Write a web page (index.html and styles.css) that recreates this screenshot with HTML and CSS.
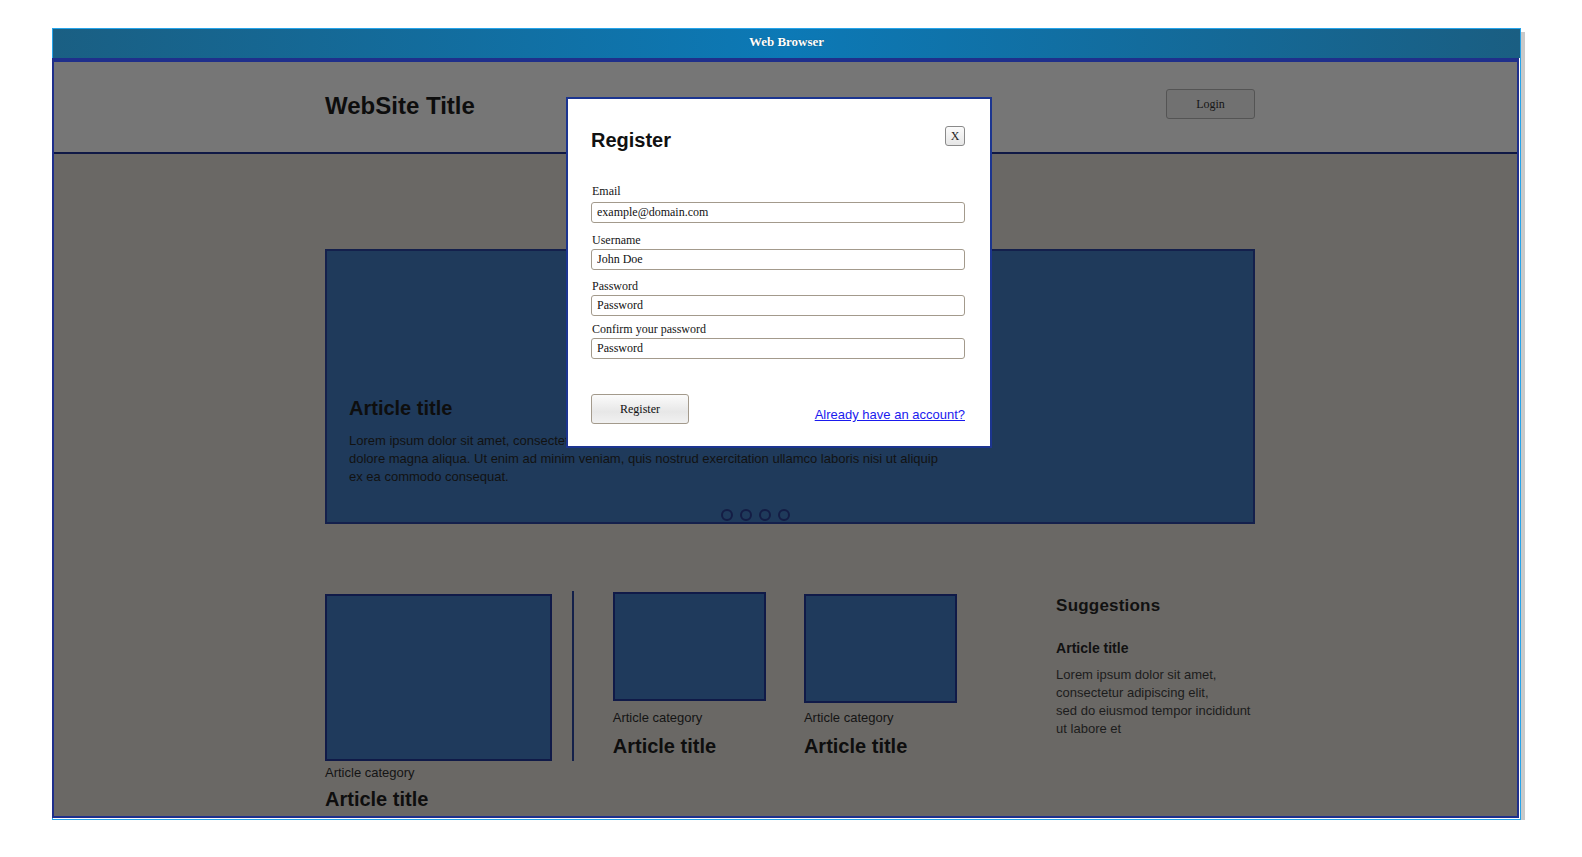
FILE: index.html
```html
<!DOCTYPE html>
<html lang="en">
<head>
<meta charset="utf-8">
<title>Register</title>
<link rel="stylesheet" href="styles.css">
</head>
<body>
<div class="window">
  <div class="titlebar">Web Browser</div>
  <div class="viewport">
    <header class="site-header">
      <div class="container header-row">
        <h1 class="site-title">WebSite Title</h1>
        <button class="login-btn" type="button">Login</button>
      </div>
    </header>
    <main class="site-body">
      <div class="container">
        <section class="hero">
          <div class="hero-text">
            <h2 class="hero-title">Article title</h2>
            <p class="hero-desc">Lorem ipsum dolor sit amet, consectetur adipiscing elit, sed do eiusmod tempor incididunt ut labore et dolore magna aliqua. Ut enim ad minim veniam, quis nostrud exercitation ullamco laboris nisi ut aliquip ex ea commodo consequat.</p>
          </div>
          <div class="dots">
            <span class="dot"></span><span class="dot"></span><span class="dot"></span><span class="dot"></span>
          </div>
        </section>
        <section class="articles">
          <article class="card card-lg">
            <div class="thumb"></div>
            <div class="cat">Article category</div>
            <h3 class="card-title">Article title</h3>
          </article>
          <div class="divider"></div>
          <article class="card card-sm card-b">
            <div class="thumb"></div>
            <div class="cat">Article category</div>
            <h3 class="card-title">Article title</h3>
          </article>
          <article class="card card-sm card-c">
            <div class="thumb"></div>
            <div class="cat">Article category</div>
            <h3 class="card-title">Article title</h3>
          </article>
          <aside class="suggest">
            <h3 class="suggest-head">Suggestions</h3>
            <h4 class="suggest-title">Article title</h4>
            <p class="suggest-text">Lorem ipsum dolor sit amet,<br>consectetur adipiscing elit,<br>sed do eiusmod tempor incididunt<br>ut labore et</p>
          </aside>
        </section>
      </div>
    </main>
  </div>
</div>

<div class="modal">
  <div class="modal-head">
    <h2 class="modal-title">Register</h2>
    <button class="close-btn" type="button">X</button>
  </div>
  <form class="form">
    <div class="field field-email">
      <label class="label">Email</label>
      <input class="input" type="text" value="example@domain.com">
    </div>
    <div class="field field-user">
      <label class="label">Username</label>
      <input class="input" type="text" value="John Doe">
    </div>
    <div class="field field-pass">
      <label class="label">Password</label>
      <input class="input" type="password" placeholder="Password">
    </div>
    <div class="field field-confirm">
      <label class="label">Confirm your password</label>
      <input class="input" type="password" placeholder="Password">
    </div>
    <div class="form-foot">
      <button class="reg-btn" type="button">Register</button>
      <a class="login-link" href="#">Already have an account?</a>
    </div>
  </form>
</div>
</body>
</html>
```

FILE: styles.css
```css
* { box-sizing: border-box; }

body {
  margin: 0;
  background: #ffffff;
  font-family: "Liberation Sans", Arial, sans-serif;
  color: #111;
}

.window {
  margin: 28px 0 0 52px;
  width: 1469px;
  border: 1px solid #25a4ea;
  background: #ffffff;
  box-shadow: 4px 4px 0 #c9c9c9;
}

.titlebar {
  height: 29px;
  padding-bottom: 4px;
  line-height: 25px;
  text-align: center;
  font-family: "Liberation Serif", "Times New Roman", serif;
  font-weight: bold;
  font-size: 13px;
  color: #ffffff;
  text-shadow: 0 0 1px rgba(0,0,0,0.4);
  background: linear-gradient(to right, #1a5f83 0%, #0c79b6 50%, #1a5e82 100%);
}

.viewport {
  margin: 0 1px 1px -1px;
  border: 2px solid #1f2f8b;
  border-top-width: 4px;
}

.site-header {
  height: 92px;
  background: #767676;
  border-bottom: 2px solid #0f1845;
}

.container {
  width: 930px;
  margin-left: 271px;
}

.header-row {
  display: flex;
  justify-content: space-between;
  align-items: flex-start;
  padding-top: 27px;
}

.site-title {
  margin: 3px 0 0;
  font-size: 24px;
  font-weight: bold;
  line-height: normal;
  color: #0d0d0d;
}

.login-btn {
  width: 89px;
  height: 30px;
  padding: 0;
  border: 1px solid #545454;
  border-radius: 3px;
  background: #717171;
  font-family: "Liberation Serif", "Times New Roman", serif;
  font-size: 12px;
  color: #161616;
}

.site-body {
  height: 662px;
  background: #6a6865;
  overflow: hidden;
}

.hero {
  margin-top: 95px;
  height: 275px;
  border: 2px solid #14204c;
  background: #1f3a5b;
  padding: 0 22px 1px;
  display: flex;
  flex-direction: column;
  justify-content: flex-end;
}

.hero-title {
  margin: 0 0 12px;
  font-size: 20px;
  font-weight: bold;
  line-height: 23px;
  color: #0e0e0e;
}

.hero-desc {
  margin: 0;
  width: 600px;
  font-size: 13px;
  line-height: 18px;
  color: #121212;
}

.dots {
  display: flex;
  gap: 7px;
  margin: 23px 0 0 372px;
}

.dot {
  width: 12px;
  height: 12px;
  border: 2px solid #141d45;
  border-radius: 50%;
}

.articles {
  margin-top: 67px;
  display: flex;
  align-items: flex-start;
}

.card .thumb {
  border: 2px solid #101a48;
  background: #1f3a5c;
}

.card-lg {
  width: 228px;
  margin-top: 3px;
}
.card-lg .thumb { height: 167px; }
.card-lg .cat { margin-top: 4px; }
.card-lg .card-title { margin-top: 8px; }

.divider {
  width: 2px;
  height: 170px;
  margin-left: 20px;
  background: #13204a;
}

.card-sm { width: 154px; }
.card-sm .thumb { height: 109px; }
.card-sm .card-title { margin-top: 10px; }

.card-b { margin: 1px 0 0 39px; }
.card-b .cat { margin-top: 9px; }

.card-c { margin: 3px 0 0 38px; }
.card-c .cat { margin-top: 7px; }

.cat {
  font-size: 13px;
  line-height: 15px;
  color: #141414;
}

.card-title {
  margin: 0;
  font-size: 20px;
  font-weight: bold;
  line-height: 23px;
  color: #0e0e0e;
}

.suggest {
  margin-left: 99px;
  width: 200px;
}

.suggest-head {
  margin: 5px 0 0;
  font-size: 17px;
  font-weight: bold;
  line-height: 20px;
  color: #111;
  letter-spacing: 0.2px;
}

.suggest-title {
  margin: 24px 0 0;
  font-size: 14px;
  font-weight: bold;
  line-height: 16px;
  color: #111;
}

.suggest-text {
  margin: 10px 0 0;
  font-size: 13px;
  line-height: 18px;
  color: #1c1c1c;
}

/* Modal */
.modal {
  position: absolute;
  left: 566px;
  top: 97px;
  width: 426px;
  border: 2px solid #1c3590;
  background: #ffffff;
  padding: 27px 25px 22px 23px;
}

.modal-head {
  display: flex;
  justify-content: space-between;
  align-items: flex-start;
}

.modal-title {
  margin: 3px 0 0;
  font-size: 20px;
  font-weight: bold;
  line-height: 23px;
  color: #111;
}

.close-btn {
  width: 20px;
  height: 20px;
  padding: 0;
  border: 1px solid #8a8a8a;
  border-radius: 3px;
  background: linear-gradient(#fbfbfb, #e6e6e6);
  font-family: "Liberation Serif", "Times New Roman", serif;
  font-size: 12px;
  color: #222;
  line-height: 18px;
}

.form {
  margin-top: 32px;
}

.field { display: flex; flex-direction: column; }
.field-user { margin-top: 10px; }
.field-pass { margin-top: 9px; }
.field-confirm { margin-top: 6px; }

.label {
  font-family: "Liberation Serif", "Times New Roman", serif;
  font-size: 12px;
  line-height: 14px;
  color: #151515;
  padding-left: 1px;
  margin-bottom: 2px;
}
.field-email .label { margin-bottom: 4px; }

.input {
  width: 100%;
  height: 21px;
  margin: 0;
  padding: 0 5px;
  border: 1px solid #a39a8c;
  border-radius: 3px;
  font-family: "Liberation Serif", "Times New Roman", serif;
  font-size: 12px;
  color: #111;
  background: #fff;
}
.input::placeholder { color: #111; opacity: 1; }

.form-foot {
  margin-top: 35px;
  display: flex;
  justify-content: space-between;
  align-items: flex-end;
}

.reg-btn {
  width: 98px;
  height: 30px;
  padding: 0;
  border: 1px solid #a39a8c;
  border-radius: 3px;
  background: linear-gradient(#fbfbfb, #e7e7e7 60%, #f1f1f1);
  font-family: "Liberation Serif", "Times New Roman", serif;
  font-size: 12px;
  color: #111;
}

.login-link {
  margin-bottom: 2px;
  font-size: 13px;
  line-height: 15px;
  color: #1a1aee;
  text-decoration: underline;
}
```
